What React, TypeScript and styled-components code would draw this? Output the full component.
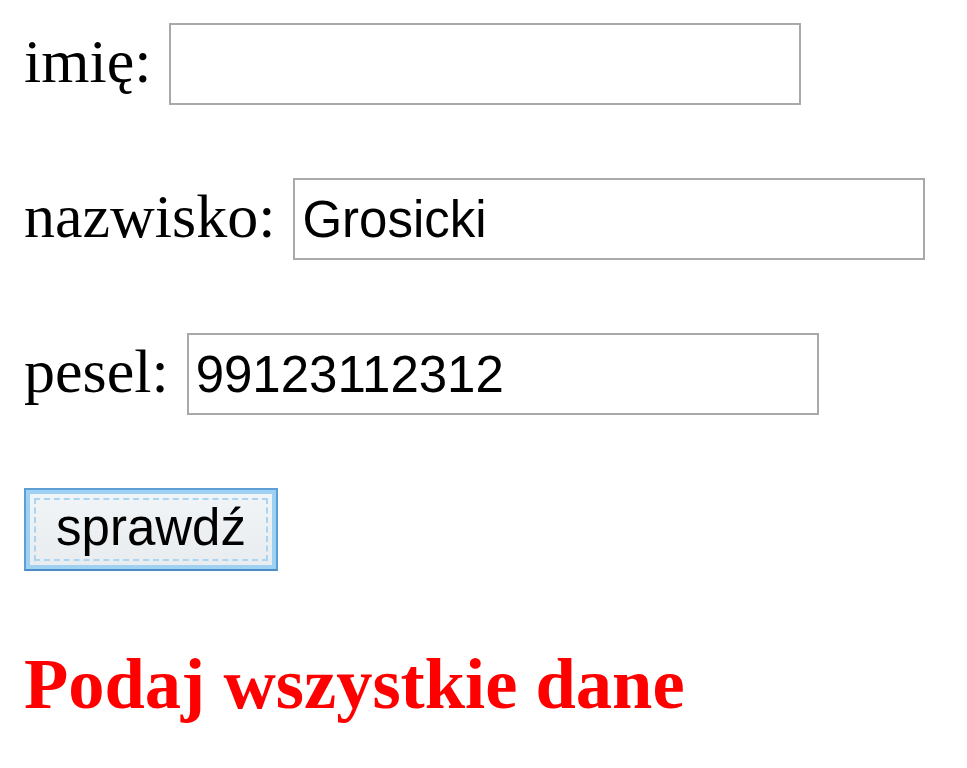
import styled, { createGlobalStyle } from 'styled-components';

const GlobalStyle = createGlobalStyle`
  body {
    margin: 0;
    background: #ffffff;
  }
`;

const Page = styled.div`
  display: flex;
  flex-direction: column;
  align-items: flex-start;
  gap: 73px;
  padding: 23px 0 0 24px;
  font-family: 'Liberation Serif', 'Times New Roman', serif;
  color: #000;
`;

const Row = styled.div`
  display: flex;
  align-items: baseline;
  gap: 18px;
`;

const Label = styled.label`
  font-size: 62px;
  line-height: normal;
`;

const Field = styled.input`
  box-sizing: border-box;
  width: 632px;
  height: 82px;
  margin: 0;
  padding: 0 7px;
  border: 2px solid #a9a9a9;
  background: #fff;
  font-family: 'Liberation Sans', Arial, sans-serif;
  font-size: 51px;
  color: #000;
  outline: none;
`;

const Button = styled.button`
  box-sizing: border-box;
  width: 254px;
  height: 83px;
  margin: 0;
  padding: 0 0 4px;
  border: 2px solid #5d9fd5;
  border-bottom-color: #4a8cc4;
  box-shadow: inset 0 0 0 4px #9fd1f3;
  background: linear-gradient(#f2f5f7, #e8ecef);
  outline: 2px dashed #a9d5f3;
  outline-offset: -12px;
  font-family: 'Liberation Sans', Arial, sans-serif;
  font-size: 51px;
  color: #000;
`;

const Message = styled.h1`
  margin: -2px 0 0;
  font-size: 72.5px;
  font-weight: bold;
  line-height: normal;
  color: #ff0000;
`;

export default function App() {
  return (
    <>
      <GlobalStyle />
      <Page>
        <Row>
          <Label htmlFor="imie">imię:</Label>
          <Field id="imie" type="text" defaultValue="" />
        </Row>
        <Row>
          <Label htmlFor="nazwisko">nazwisko:</Label>
          <Field id="nazwisko" type="text" defaultValue="Grosicki" />
        </Row>
        <Row>
          <Label htmlFor="pesel">pesel:</Label>
          <Field id="pesel" type="text" defaultValue="99123112312" />
        </Row>
        <Button type="button">sprawdź</Button>
        <Message>Podaj wszystkie dane</Message>
      </Page>
    </>
  );
}
